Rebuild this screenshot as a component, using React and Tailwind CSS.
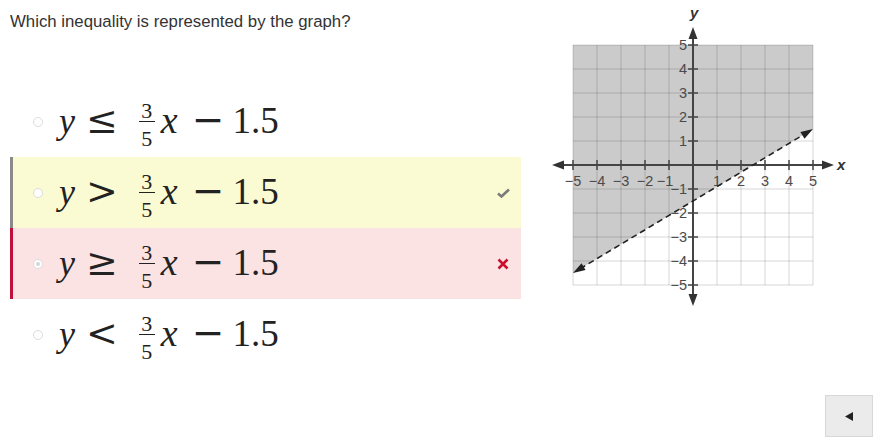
import React from 'react';

const options = [
  { rel: '≤', state: 'none' },
  { rel: '>', state: 'correct' },
  { rel: '≥', state: 'wrong' },
  { rel: '<', state: 'none' },
];

const rowStyles = {
  none: 'bg-white border-transparent',
  correct: 'bg-[#fbfbd3] border-[#8a8a8a]',
  wrong: 'bg-[#fbe2e3] border-[#c0103a]',
};

const serif = { fontFamily: '"Liberation Serif", serif' };
const symbol = { fontFamily: '"DejaVu Serif", serif' };

// 3/5 stacked, numerator baseline raised above the main baseline
const Fraction = () => (
  <span className="inline-flex flex-col items-center text-[22px] ml-[21px] align-[15px]">
    <span className="leading-[18px]">3</span>
    <span className="block h-[1.5px] w-[16px] bg-[#222] mt-[1px] mb-[5px]"></span>
    <span className="leading-[24px]">5</span>
  </span>
);

const OptionRow = ({ rel, state }) => (
  <div className={`ml-[10px] h-[71px] border-l-[3px] flex items-center pl-[20px] pr-[10px] ${rowStyles[state]}`}>
    <span className="w-[10px] h-[10px] rounded-full border border-[#dcdcdc] bg-white flex items-center justify-center">
      {state === 'wrong' && <span className="w-[4px] h-[4px] rounded-full bg-[#d6d6d6]"></span>}
    </span>
    <div className="ml-[16px] mt-[8px] whitespace-nowrap text-[37px] leading-[40px] text-[#222]" style={serif}>
      <span className="italic text-[36px]">y</span>
      <span className="ml-[11px] text-[38px]" style={symbol}>{rel}</span>
      <Fraction />
      <span className="ml-[6px] italic text-[38px]">x</span>
      <span className="ml-[14px] text-[39px]" style={symbol}>−</span>
      <span className="ml-[8px]">1.5</span>
    </div>
    <div className="flex-1" />
    {state === 'correct' && (
      <svg width="13" height="10" viewBox="0 0 13 10" className="mr-[1px]">
        <path d="M1 5.5 L4.5 8.5 L12 1.5" stroke="#7a7a7a" strokeWidth="2.6" fill="none" />
      </svg>
    )}
    {state === 'wrong' && (
      <svg width="12" height="12" viewBox="0 0 12 12" className="mr-[2px]">
        <path d="M1.5 1.5 L10.5 10.5 M10.5 1.5 L1.5 10.5" stroke="#c8102e" strokeWidth="2.6" />
      </svg>
    )}
  </div>
);

const Graph = () => {
  const x0 = 573, y0 = 45, u = 24;
  const cx = 693, cy = 165;
  const ticks = [-5, -4, -3, -2, -1, 1, 2, 3, 4, 5];
  const grid = [0, 1, 2, 3, 4, 5, 6, 7, 8, 9, 10];
  return (
    <svg width="310" height="310" viewBox="545 0 310 310" style={{ fontFamily: '"Liberation Sans", Arial, sans-serif' }}>
      <rect x={x0} y={y0} width={u * 10} height={u * 10} fill="#fff" />
      <polygon points="573,45 813,45 813,129 573,273" fill="#cbcbcb" />
      {grid.map((k) => (
        <g key={k}>
          <line x1={x0 + k * u} y1={y0} x2={x0 + k * u} y2={y0 + 10 * u} stroke="#000" strokeOpacity="0.16" />
          <line x1={x0} y1={y0 + k * u} x2={x0 + 10 * u} y2={y0 + k * u} stroke="#000" strokeOpacity="0.16" />
        </g>
      ))}
      <line x1="558" y1={cy} x2="828" y2={cy} stroke="#444" strokeWidth="2" />
      <line x1={cx} y1="33" x2={cx} y2="300" stroke="#444" strokeWidth="2" />
      <polygon points="552,165 564,160.5 564,169.5" fill="#333" />
      <polygon points="834,165 822,160.5 822,169.5" fill="#333" />
      <polygon points="693,27 688.5,39 697.5,39" fill="#333" />
      <polygon points="693,306 688.5,294 697.5,294" fill="#333" />
      {ticks.map((t) => (
        <g key={t}>
          <line x1={cx + t * u} y1={cy - 5} x2={cx + t * u} y2={cy + 5} stroke="#444" strokeWidth="1.5" />
          <line x1={cx - 5} y1={cy - t * u} x2={cx + 5} y2={cy - t * u} stroke="#444" strokeWidth="1.5" />
          <text x={cx + t * u - (t === -1 ? 4 : 0)} y={cy + 21} fontSize="14.5" fill="#4a4a4a" textAnchor="middle">
            {t < 0 ? `−${-t}` : t}
          </text>
          <text x={cx - 6} y={cy - t * u + 5} fontSize="14.5" fill="#4a4a4a" textAnchor="end">
            {t < 0 ? `−${-t}` : t}
          </text>
        </g>
      ))}
      <text x="837" y="170" fontSize="15" fontWeight="bold" fontStyle="italic" fill="#333">x</text>
      <text x="690" y="18" fontSize="15" fontWeight="bold" fontStyle="italic" fill="#333">y</text>
      <line x1="580" y1="268.8" x2="806" y2="133.2" stroke="#222" strokeWidth="1.6" strokeDasharray="6 4" />
      <polygon points="573,273 581.5,263.2 585.6,270" fill="#222" />
      <polygon points="813,129 804.5,138.8 800.4,132" fill="#222" />
    </svg>
  );
};

export default function App() {
  return (
    <div className="w-[873px] h-[437px] bg-white flex flex-col text-[#333]" style={{ fontFamily: '"Liberation Sans", Arial, sans-serif' }}>
      <div className="flex flex-1">
        <div className="w-[521px]">
          <p className="pl-[10px] pt-[11px] text-[16.8px] leading-[22px] text-[#333]">Which inequality is represented by the graph?</p>
          <div className="mt-[53px]">
            {options.map((o) => (
              <OptionRow key={o.rel} rel={o.rel} state={o.state} />
            ))}
          </div>
        </div>
        <div className="ml-[24px]">
          <Graph />
        </div>
      </div>
      <div className="flex justify-end">
        <button className="w-[48px] h-[42px] bg-[#ebebeb] border border-[#d8d8d8] flex items-center justify-center">
          <svg width="8" height="9" viewBox="0 0 8 9">
            <polygon points="0,4.5 8,0 8,9" fill="#222" />
          </svg>
        </button>
      </div>
    </div>
  );
}
